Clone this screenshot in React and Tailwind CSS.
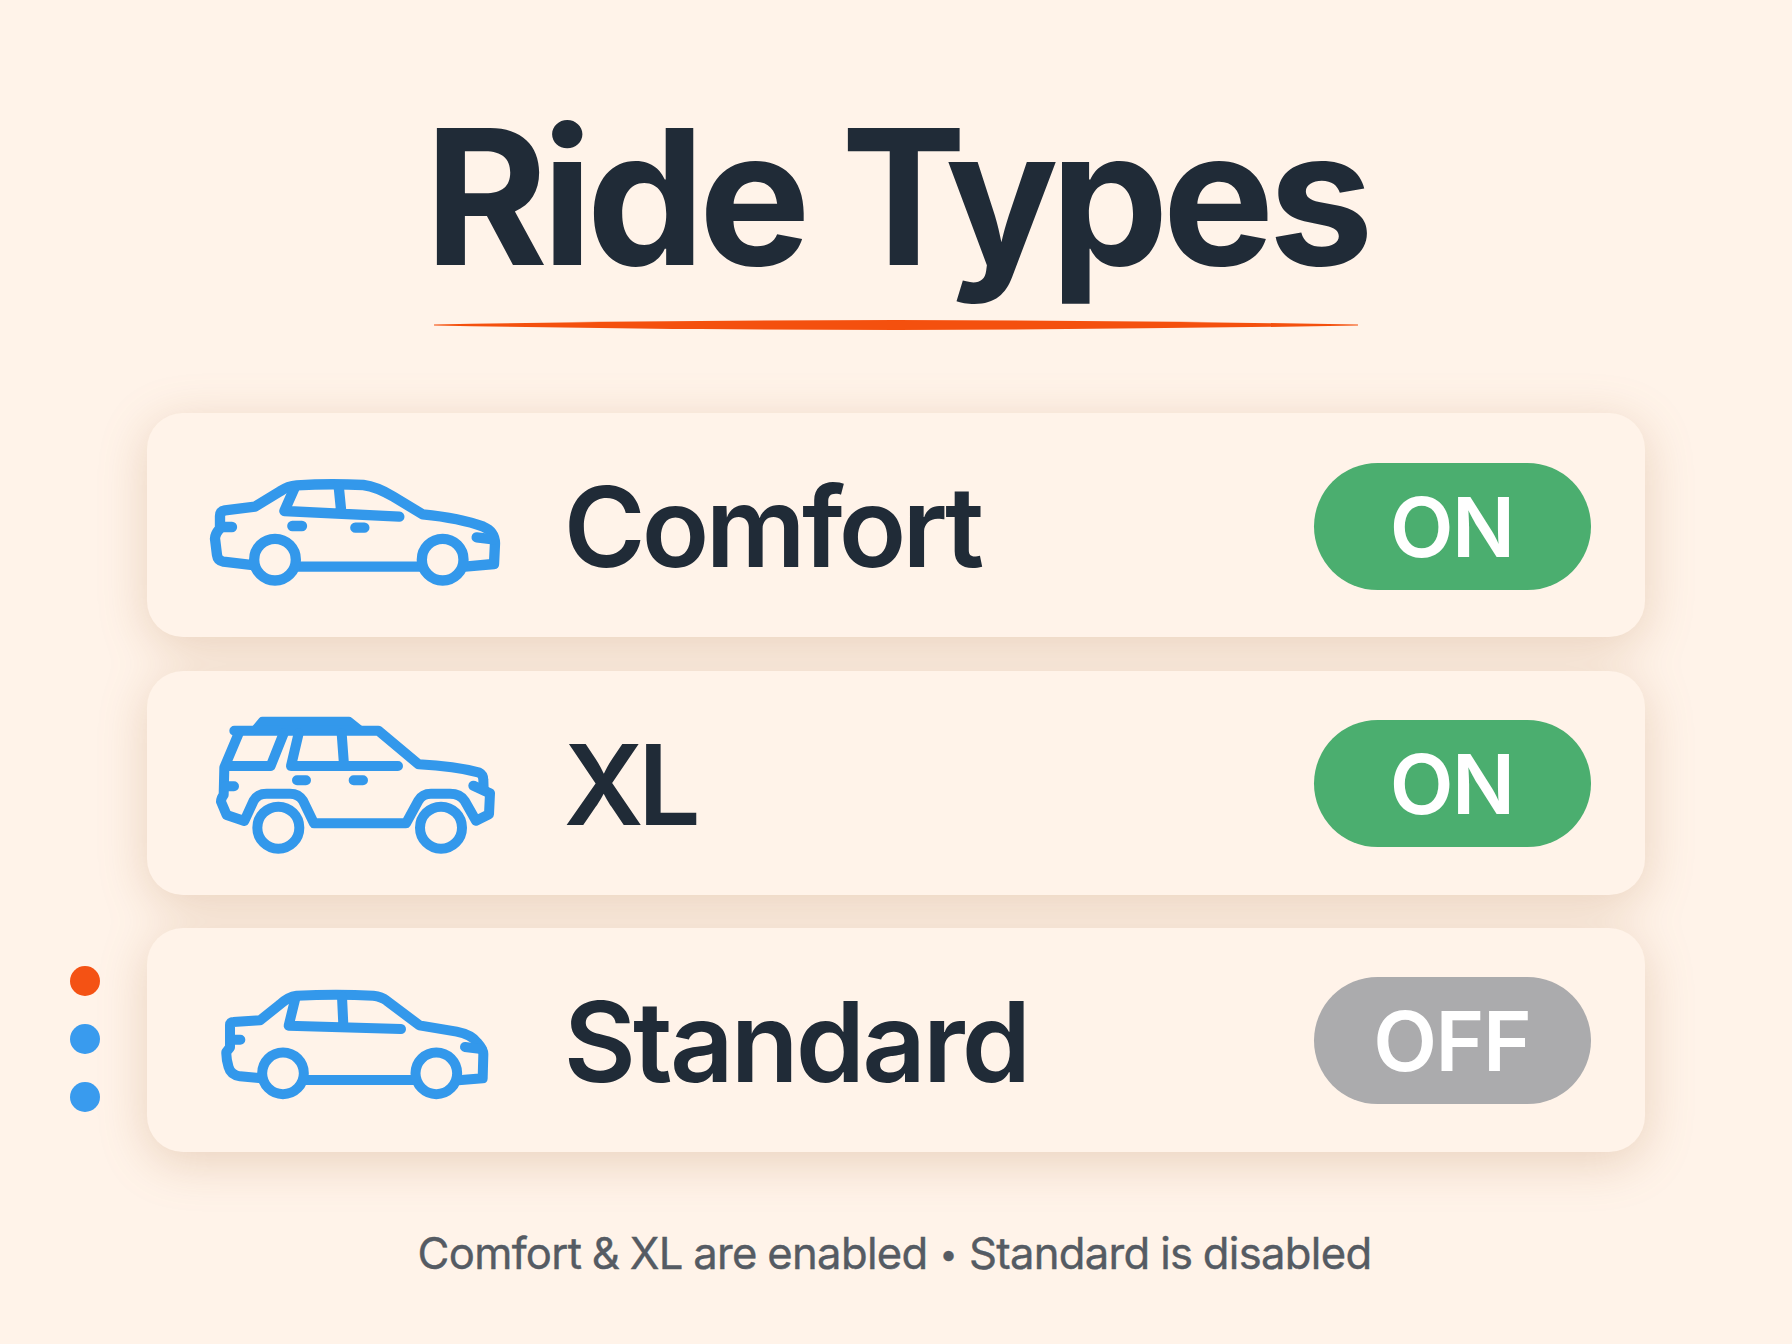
import React from "react";

function ComfortCar() {
  return (
    <svg viewBox="0 0 930 420" className="w-[310px] h-[140px]" fill="none" stroke="currentColor" strokeWidth="31" strokeLinecap="round" strokeLinejoin="round">
      <path strokeLinecap="butt" d="M165 316 L70 305 Q53 302 51 285 L45 236 Q45 222 60 205 L60 168 Q60 154 75 151 L165 140 L240 94 Q264 78 290 76 Q390 70 490 75 Q530 80 580 110 L668 163 C750 171 810 185 850 200 Q884 214 885 250 L882 312 L795 320" />
      <path d="M283 85 L253 153 L598 170 M416 78 L424 158" />
      <path d="M66 201 H96 M277 198 H306 M466 203 H493 M830 232 L880 238" />
      <path strokeLinecap="butt" d="M290 320 H665" />
      <circle cx="225" cy="299" r="62.5" />
      <circle cx="728" cy="299" r="62.5" />
    </svg>
  );
}

function XLCar() {
  return (
    <svg viewBox="0 0 930 510" className="w-[310px] h-[170px]" fill="none" stroke="currentColor" strokeWidth="30" strokeLinecap="round" strokeLinejoin="round">
      <path fill="currentColor" stroke="none" d="M158 78 L178 54 Q181 50 187 50 H447 Q452 50 456 54 L486 78 V95 H158 Z" />
      <path d="M103 92 H535 L656 193 C720 196 790 205 838 218 Q850 224 850 240 L851 268" />
      <path d="M820 257 L870 280 L867 343 L828 362 L794 302 Q780 281 750 281 H693 Q667 281 655 302 L618 370 H342 L309 302 Q296 281 270 281 H200 Q172 281 161 302 L133 363 L80 345 L63 305 Q63 294 71 285 L73 202 L116 100" />
      <path d="M82 198 H212 L251 100 M296 100 L273 198 H594 M425 100 L432 195" />
      <path d="M76 259 H102 M291 241 H318 M461 241 H489" />
      <circle cx="235" cy="383" r="63" />
      <circle cx="723" cy="383" r="63" />
    </svg>
  );
}

function StandardCar() {
  return (
    <svg viewBox="0 0 930 420" className="w-[310px] h-[140px]" fill="none" stroke="currentColor" strokeWidth="30" strokeLinecap="round" strokeLinejoin="round">
      <path strokeLinecap="butt" d="M185 325 L120 319 Q92 315 86 292 Q78 265 79 246 L90 232 L90 165 Q90 156 100 156 L180 151 L240 103 Q265 80 290 77 Q410 72 520 77 Q545 80 560 92 L658 166 L770 185 Q815 194 832 218 Q850 238 850 252 L848 325 L775 331" />
      <path d="M286 85 L266 167 L603 177 M426 80 L430 165" />
      <path d="M94 209 H121 M795 231 L845 237" />
      <path strokeLinecap="butt" d="M315 330 H645" />
      <circle cx="249" cy="310" r="62.5" />
      <circle cx="709" cy="310" r="62.5" />
    </svg>
  );
}

const rides = [
  { name: "Comfort", enabled: true, icon: <ComfortCar />, offset: "pt-[47px]", tracking: "tracking-[-0.0335em]" },
  { name: "XL", enabled: true, icon: <XLCar />, offset: "pt-[29.3px]", tracking: "tracking-[-0.05em]" },
  { name: "Standard", enabled: false, icon: <StandardCar />, offset: "pt-[42px]", tracking: "tracking-[-0.026em]" },
];

function RideCard({ ride }) {
  return (
    <li className="flex h-[224px] rounded-[36px] bg-[#fff3e9] pl-[53px] pr-[54.5px]">
      <div className={`w-[310px] shrink-0 text-[#3398eb] ${ride.offset}`}>{ride.icon}</div>
      <span className={`ml-[54px] mt-[58px] grow text-[111px] leading-[112px] font-semibold whitespace-nowrap ${ride.tracking}`}>
        {ride.name}
      </span>
      <button
        className={`mt-[49.3px] flex h-[127px] w-[277px] items-center justify-center rounded-full pt-[2px] pr-[1px] text-[83px] leading-none font-semibold tracking-[-0.018em] text-white ${
          ride.enabled ? "bg-[#4bae6f]" : "bg-[#ababad]"
        }`}
      >
        {ride.enabled ? "ON" : "OFF"}
      </button>
    </li>
  );
}

function App() {
  return (
    <div className="relative flex h-[1344px] w-[1792px] flex-col items-center overflow-hidden bg-[#fff3e9] font-['Inter',sans-serif] text-[#202b37]">
      <h1 className="mt-[103px] text-[188px] leading-[188px] font-bold tracking-[-0.033em] [word-spacing:-2px] whitespace-nowrap">
        Ride <span className="tracking-[-0.111em]">T</span>
        <span className="tracking-[-0.045em]">y</span>pes
      </h1>
      <svg viewBox="0 0 924 10" className="mt-[29px] h-[10px] w-[924px]">
        <path d="M0 4.5 Q231 0.5 462 0 Q693 0.5 924 4.5 V5.5 Q693 9.5 462 10 Q231 9.5 0 5.5 Z" fill="#f4500e" />
      </svg>

      <ul className="mt-[83.3px] flex w-[1498.5px] flex-col gap-[33.4px] drop-shadow-[0_10px_24px_rgba(165,105,50,0.24)]">
        {rides.map((ride) => (
          <RideCard key={ride.name} ride={ride} />
        ))}
      </ul>

      <p className="mt-[75px] pr-[3px] text-[43.6px] leading-[54px] tracking-[-0.016em] [word-spacing:-1px] whitespace-nowrap text-[#555b63] [-webkit-text-stroke:0.4px_#555b63]">
        Comfort &amp; XL are enabled <span className="mx-[1.5px] align-[4.5px] text-[32px] leading-none">•</span> Standard is disabled
      </p>

      {/* page dots */}
      <div className="absolute top-[966px] left-[70px] flex flex-col gap-[28.6px]">
        <span className="size-[29.5px] rounded-full bg-[#f45214]" />
        <span className="size-[29.5px] rounded-full bg-[#399bee]" />
        <span className="size-[29.5px] rounded-full bg-[#399bee]" />
      </div>
    </div>
  );
}

export default App;
